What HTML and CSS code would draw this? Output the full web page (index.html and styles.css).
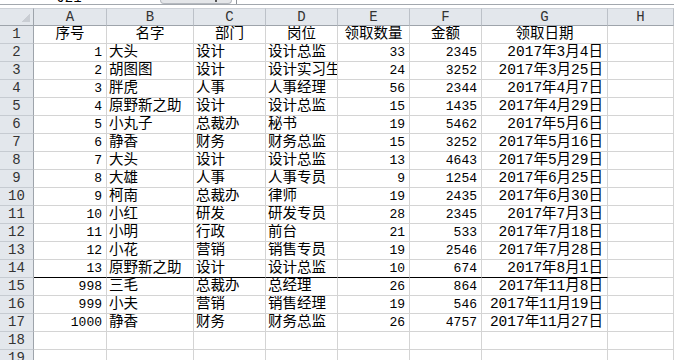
FILE: index.html
```html
<!DOCTYPE html>
<html lang="zh">
<head>
<meta charset="utf-8">
<title>领取记录</title>
<link rel="stylesheet" href="styles.css">
</head>
<body>
<div class="topbar">
  <div class="namebox"><span class="namebox-text">J21</span></div>
  <div class="fxbtn"><span class="fxmark"></span></div>
  <div class="formula"></div>
</div>
<div class="gap"></div>
<div class="sheet">
  <div class="corner"></div>
  <div class="ch">A</div><div class="ch">B</div><div class="ch">C</div><div class="ch">D</div><div class="ch">E</div><div class="ch">F</div><div class="ch">G</div><div class="ch">H</div>

  <div class="rh">1</div><div class="c m">序号</div><div class="c m">名字</div><div class="c m">部门</div><div class="c m">岗位</div><div class="c m">领取数量</div><div class="c m">金额</div><div class="c m">领取日期</div><div class="c"></div>

  <div class="rh">2</div><div class="c r n">1</div><div class="c">大头</div><div class="c">设计</div><div class="c">设计总监</div><div class="c r n">33</div><div class="c r n">2345</div><div class="c r">2017年3月4日</div><div class="c"></div>
  <div class="rh">3</div><div class="c r n">2</div><div class="c">胡图图</div><div class="c">设计</div><div class="c">设计实习生</div><div class="c r n">24</div><div class="c r n">3252</div><div class="c r">2017年3月25日</div><div class="c"></div>
  <div class="rh">4</div><div class="c r n">3</div><div class="c">胖虎</div><div class="c">人事</div><div class="c">人事经理</div><div class="c r n">56</div><div class="c r n">2344</div><div class="c r">2017年4月7日</div><div class="c"></div>
  <div class="rh">5</div><div class="c r n">4</div><div class="c">原野新之助</div><div class="c">设计</div><div class="c">设计总监</div><div class="c r n">15</div><div class="c r n">1435</div><div class="c r">2017年4月29日</div><div class="c"></div>
  <div class="rh">6</div><div class="c r n">5</div><div class="c">小丸子</div><div class="c">总裁办</div><div class="c">秘书</div><div class="c r n">19</div><div class="c r n">5462</div><div class="c r">2017年5月6日</div><div class="c"></div>
  <div class="rh">7</div><div class="c r n">6</div><div class="c">静香</div><div class="c">财务</div><div class="c">财务总监</div><div class="c r n">15</div><div class="c r n">3252</div><div class="c r">2017年5月16日</div><div class="c"></div>
  <div class="rh">8</div><div class="c r n">7</div><div class="c">大头</div><div class="c">设计</div><div class="c">设计总监</div><div class="c r n">13</div><div class="c r n">4643</div><div class="c r">2017年5月29日</div><div class="c"></div>
  <div class="rh">9</div><div class="c r n">8</div><div class="c">大雄</div><div class="c">人事</div><div class="c">人事专员</div><div class="c r n">9</div><div class="c r n">1254</div><div class="c r">2017年6月25日</div><div class="c"></div>
  <div class="rh">10</div><div class="c r n">9</div><div class="c">柯南</div><div class="c">总裁办</div><div class="c">律师</div><div class="c r n">19</div><div class="c r n">2435</div><div class="c r">2017年6月30日</div><div class="c"></div>
  <div class="rh">11</div><div class="c r n">10</div><div class="c">小红</div><div class="c">研发</div><div class="c">研发专员</div><div class="c r n">28</div><div class="c r n">2345</div><div class="c r">2017年7月3日</div><div class="c"></div>
  <div class="rh">12</div><div class="c r n">11</div><div class="c">小明</div><div class="c">行政</div><div class="c">前台</div><div class="c r n">21</div><div class="c r n">533</div><div class="c r">2017年7月18日</div><div class="c"></div>
  <div class="rh">13</div><div class="c r n">12</div><div class="c">小花</div><div class="c">营销</div><div class="c">销售专员</div><div class="c r n">19</div><div class="c r n">2546</div><div class="c r">2017年7月28日</div><div class="c"></div>
  <div class="rh">14</div><div class="c r n sep">13</div><div class="c sep">原野新之助</div><div class="c sep">设计</div><div class="c sep">设计总监</div><div class="c r n sep">10</div><div class="c r n sep">674</div><div class="c r sep">2017年8月1日</div><div class="c"></div>
  <div class="rh">15</div><div class="c r n">998</div><div class="c">三毛</div><div class="c">总裁办</div><div class="c">总经理</div><div class="c r n">26</div><div class="c r n">864</div><div class="c r">2017年11月8日</div><div class="c"></div>
  <div class="rh">16</div><div class="c r n">999</div><div class="c">小夫</div><div class="c">营销</div><div class="c">销售经理</div><div class="c r n">19</div><div class="c r n">546</div><div class="c r">2017年11月19日</div><div class="c"></div>
  <div class="rh">17</div><div class="c r n">1000</div><div class="c">静香</div><div class="c">财务</div><div class="c">财务总监</div><div class="c r n">26</div><div class="c r n">4757</div><div class="c r">2017年11月27日</div><div class="c"></div>
  <div class="rh">18</div><div class="c"></div><div class="c"></div><div class="c"></div><div class="c"></div><div class="c"></div><div class="c"></div><div class="c"></div><div class="c"></div>
  <div class="rh">19</div><div class="c"></div><div class="c"></div><div class="c"></div><div class="c"></div><div class="c"></div><div class="c"></div><div class="c"></div><div class="c"></div>
</div>
</body>
</html>
```
FILE: styles.css
```css
* { box-sizing: border-box; }

body {
  margin: 0;
  width: 674px;
  height: 360px;
  overflow: hidden;
  background: #fff;
  color: #000;
  font-family: "Liberation Mono", "Noto Sans CJK SC", monospace;
}

.topbar {
  display: flex;
  height: 5px;
  border-bottom: 1px solid #a3a8ae;
  overflow: hidden;
}

.namebox {
  width: 160px;
  padding-right: 22px;
  text-align: center;
  font-size: 14px;
  line-height: 14px;
}

.namebox-text {
  display: block;
  margin-top: -9px;
}

.fxbtn {
  width: 72px;
  margin-right: 4px;
  display: flex;
  justify-content: flex-end;
  align-items: flex-end;
  padding: 0 14px 1px 0;
  background: #e4e6e9;
  border: 1px solid #b5b9bf;
  border-top: none;
  border-radius: 0 0 12px 12px;
}

.fxmark {
  width: 2px;
  height: 2px;
  background: #555;
}

.formula {
  flex: 1;
  border-left: 1px solid #8f949a;
}

.gap { height: 3px; }

.sheet {
  display: grid;
  grid-template-columns: 34px 73px 87px 72px 72px 72px 72px 126px 1fr;
  grid-auto-rows: 18px;
}

.ch, .corner {
  background: #e3e7ec;
  border-top: 1px solid #cdd1d7;
  border-right: 1px solid #bcc1c8;
  border-bottom: 1px solid #9ea4ab;
  text-align: center;
  font-size: 14px;
  line-height: 16px;
  color: #333;
}

.corner {
  border-right-color: #9ea4ab;
  background:
    linear-gradient(135deg, transparent 50%, #c9cdd3 50%) right 3px bottom 3px / 9px 9px no-repeat,
    #e3e7ec;
}

.rh {
  background: #e3e7ec;
  border-right: 1px solid #9ea4ab;
  border-bottom: 1px solid #c6cbd1;
  text-align: center;
  font-size: 14px;
  line-height: 17px;
  color: #333;
}

.c {
  border-right: 1px solid #d4d4d4;
  border-bottom: 1px solid #d4d4d4;
  padding: 0 2px;
  font-size: 14.5px;
  line-height: 17px;
  white-space: nowrap;
  overflow: hidden;
}

.m { text-align: center; }
.r { text-align: right; padding-right: 4px; }
.n { font-size: 13px; }
.sep { border-bottom-color: #000; }
```
